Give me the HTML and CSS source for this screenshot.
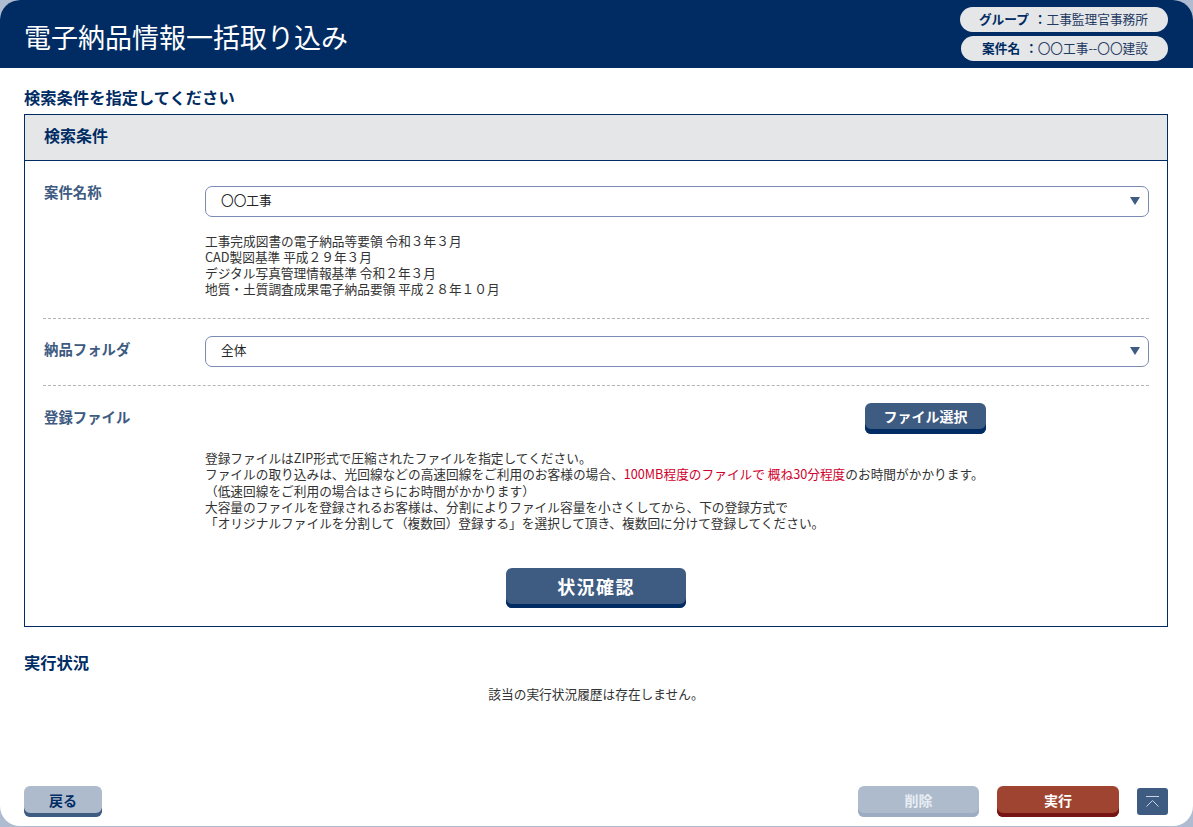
FILE: index.html
```html
<!DOCTYPE html>
<html lang="ja">
<head>
<meta charset="utf-8">
<title>電子納品情報一括取り込み</title>
<link rel="stylesheet" href="styles.css">
</head>
<body>
<div class="page">
  <header class="header">
    <h1 class="title">電子納品情報一括取り込み</h1>
    <div class="pills">
      <div class="pill pill-a"><b>グループ ：</b>工事監理官事務所</div>
      <div class="pill pill-b"><b>案件名 ：</b>〇〇工事--〇〇建設</div>
    </div>
  </header>
  <main class="main">
    <h2 class="heading">検索条件を指定してください</h2>
    <section class="panel">
      <div class="panel-head">検索条件</div>
      <div class="panel-body">
        <div class="row row-first">
          <div class="label">案件名称</div>
          <div class="field">
            <div class="select">〇〇工事<span class="arrow"></span></div>
            <div class="note note-std">工事完成図書の電子納品等要領 令和３年３月<br>CAD製図基準 平成２９年３月<br>デジタル写真管理情報基準 令和２年３月<br>地質・土質調査成果電子納品要領 平成２８年１０月</div>
          </div>
        </div>
        <div class="row row-second">
          <div class="label label-mid">納品フォルダ</div>
          <div class="field">
            <div class="select">全体<span class="arrow"></span></div>
          </div>
        </div>
        <div class="row row-third">
          <div class="label label-file">登録ファイル</div>
          <div class="field">
            <div class="file-line"><button class="btn btn-file">ファイル選択</button></div>
            <div class="note note-file">登録ファイルはZIP形式で圧縮されたファイルを指定してください。<br>ファイルの取り込みは、光回線などの高速回線をご利用のお客様の場合、<span class="red">100MB程度のファイルで 概ね30分程度</span>のお時間がかかります。<br>（低速回線をご利用の場合はさらにお時間がかかります）<br>大容量のファイルを登録されるお客様は、分割によりファイル容量を小さくしてから、下の登録方式で<br>「オリジナルファイルを分割して（複数回）登録する」を選択して頂き、複数回に分けて登録してください。</div>
          </div>
        </div>
        <div class="center"><button class="btn btn-check">状況確認</button></div>
      </div>
    </section>
    <h2 class="heading heading-status">実行状況</h2>
    <p class="empty">該当の実行状況履歴は存在しません。</p>
  </main>
  <footer class="footer">
    <button class="btn btn-foot btn-back">戻る</button>
    <div class="foot-right">
      <button class="btn btn-foot btn-del">削除</button>
      <button class="btn btn-foot btn-run">実行</button>
      <button class="btn-top" aria-label="top"><svg width="31" height="27" viewBox="0 0 31 27"><path d="M9 8.5H22M9.5 18.500L15.500 12.500L21.500 18.500" fill="none" stroke="#c9d2df" stroke-width="1"/></svg></button>
    </div>
  </footer>
</div>
</body>
</html>
```
FILE: styles.css
```css
* { box-sizing: border-box; }
html, body { margin: 0; height: 100%; }
body {
  background: #aebbd0;
  font-family: "Noto Sans CJK JP", "Noto Sans", sans-serif;
  font-size: 12.7px;
  color: #333;
  overflow: hidden;
}
.page {
  height: 826px;
  background: #fff;
  border-radius: 20px;
  display: flex;
  flex-direction: column;
  overflow: hidden;
}
.header {
  height: 68px;
  background: #002c63;
  display: flex;
  justify-content: space-between;
  padding: 7px 25px 0 24px;
}
.title {
  margin: 7px 0 0;
  font-size: 27px;
  line-height: 45px;
  font-weight: 400;
  color: #fff;
}
.pills { display: flex; flex-direction: column; align-items: flex-end; gap: 4px; }
.pill {
  height: 25px;
  border-radius: 13px;
  background: #e5e6e8;
  color: #1f3a63;
  font-size: 12.7px;
  line-height: 24px;
  padding-right: 20px;
  text-align: right;
  word-spacing: 2px;
}
.pill b { color: #002c63; font-weight: 700; }
.pill-a { width: 208px; }
.pill-b { width: 207px; }
.main { flex: 1; padding: 19px 25px 0 24px; }
.heading {
  margin: 0;
  font-size: 16.3px;
  line-height: 21px;
  font-weight: 700;
  color: #002c63;
}
.panel {
  margin-top: 6px;
  height: 513px;
  border: 1px solid #002c63;
}
.panel-head {
  height: 46px;
  background: #e5e6e8;
  border-bottom: 1px solid #002c63;
  padding-left: 19px;
  font-size: 16px;
  font-weight: 700;
  line-height: 41px;
  color: #002c63;
}
.panel-body { padding: 0 18px; }
.row { display: flex; border-bottom: 1px dashed #b5b5b5; }
.label {
  width: 162px;
  flex: none;
  font-size: 14.4px;
  font-weight: 700;
  color: #3e5b81;
  line-height: 20px;
  padding: 21px 0 0 1px;
}
.field { flex: 1; }
.row-first { height: 158px; }
.row-first .field { padding-top: 25px; }
.row-second { height: 67px; padding-top: 17px; }
.row .label-mid { padding-top: 3px; }
.row-third { border-bottom: 0; padding-top: 17px; }
.row .label-file { padding-top: 4px; }
.select {
  position: relative;
  height: 31px;
  border: 1px solid #7c8bb3;
  border-radius: 7px;
  background: #fff;
  color: #222;
  font-size: 12.7px;
  line-height: 26px;
  padding-left: 15px;
}
.arrow {
  position: absolute;
  right: 8px;
  top: 10px;
  width: 0;
  height: 0;
  border-left: 5px solid transparent;
  border-right: 5px solid transparent;
  border-top: 8px solid #3e5b81;
}
.note { font-size: 12.7px; color: #333; }
.note-std { margin-top: 16px; line-height: 16px; }
.note-file { margin-top: 16px; line-height: 16.3px; }
.red { color: #d0002c; }
.file-line { padding-left: 660px; height: 31px; }
.btn {
  display: block;
  border: 0;
  font-family: inherit;
  font-weight: 700;
  padding: 0;
  cursor: pointer;
}
.btn-file {
  width: 121px;
  height: 31px;
  padding-bottom: 5px;
  border-radius: 6px;
  background: #3e5b81;
  box-shadow: inset 0 -5px 0 #002c63;
  color: #fff;
  font-size: 14px;
}
.center { display: flex; justify-content: center; margin-top: 37px; }
.btn-check {
  width: 180px;
  height: 40px;
  padding-bottom: 4px;
  border-radius: 6px;
  background: #3e5b81;
  box-shadow: inset 0 -4px 0 #002c63;
  color: #fff;
  font-size: 18px;
  letter-spacing: 1.4px;
}
.heading-status { margin-top: 25px; }
.empty { margin: 12px 0 0; text-align: center; font-size: 12.7px; line-height: 18px; color: #333; }
.footer {
  display: flex;
  justify-content: space-between;
  align-items: flex-end;
  padding: 0 25px 9px 24px;
}
.foot-right { display: flex; align-items: flex-end; gap: 18px; }
.btn-foot {
  height: 31px;
  padding-bottom: 4px;
  border-radius: 6px;
  font-size: 14px;
}
.btn-back { width: 78px; background: #aebbcd; box-shadow: inset 0 -4px 0 #3e5b81; color: #002c63; }
.btn-del { width: 121px; background: #aebbcd; box-shadow: inset 0 -4px 0 #9dacc2; color: #e8edf3; }
.btn-run { width: 122px; background: #9e4430; box-shadow: inset 0 -4px 0 #761314; color: #fff; }
.btn-top {
  display: block;
  width: 31px;
  height: 27px;
  margin-bottom: 2px;
  border: 0;
  padding: 0;
  border-radius: 3px;
  background: #3e5b81;
}
.btn-top svg { display: block; }
```
